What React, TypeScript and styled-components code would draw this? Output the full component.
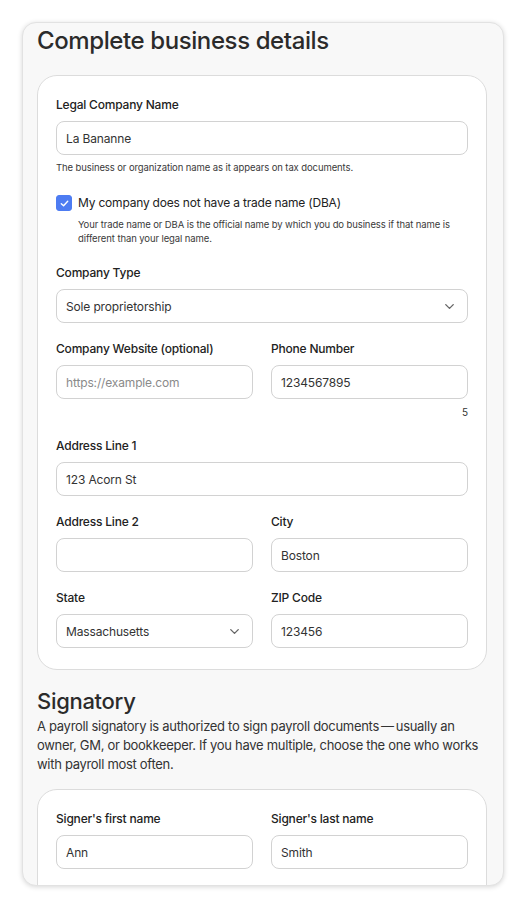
import React, { useState } from "react";
import styled, { createGlobalStyle } from "styled-components";

const GlobalStyle = createGlobalStyle`
  html, body {
    margin: 0;
    padding: 0;
    background: #fff;
  }
  body {
    font-family: Inter, "Noto Sans", "Liberation Sans", sans-serif;
    color: #2b2b2b;
  }
  * {
    box-sizing: border-box;
  }
`;

const Panel = styled.div`
  margin: 22px;
  width: 482px;
  height: 864px;
  overflow: hidden;
  background: #f8f8f8;
  border: 1px solid #e2e2e2;
  border-radius: 14px;
  box-shadow: 0 1px 5px rgba(0, 0, 0, 0.16);
  padding: 3px 16px 0 14px;
`;

const Title = styled.h1`
  margin: 0 0 19px;
  font-size: 24px;
  line-height: 30px;
  font-weight: 500;
  letter-spacing: -0.4px;
  color: #2b2b2b;
`;

const Card = styled.div<{ $bottom?: number }>`
  background: #fff;
  border: 1px solid #dcdcdc;
  border-radius: 20px;
  padding: 20px 18px ${(p) => p.$bottom ?? 21}px;
  display: flex;
  flex-direction: column;
`;

const Field = styled.div`
  display: flex;
  flex-direction: column;
  gap: 7px;
  min-width: 0;
`;

const Label = styled.label`
  font-size: 12px;
  line-height: 18px;
  font-weight: 500;
  letter-spacing: -0.2px;
  color: #222;
`;

const Input = styled.input`
  width: 100%;
  height: 34px;
  border: 1px solid #d2d2d2;
  border-radius: 8px;
  padding: 0 9px;
  font-family: inherit;
  font-size: 12px;
  letter-spacing: -0.15px;
  color: #333;
  background: #fff;
  outline: none;
  &::placeholder {
    color: #8a8a8a;
  }
`;

const Help = styled.p`
  margin: 6px 0 0;
  font-size: 9.5px;
  line-height: 14px;
  letter-spacing: -0.1px;
  color: #3a3a3a;
`;

const CheckRow = styled.div`
  margin-top: 19px;
  display: flex;
  align-items: center;
  gap: 6px;
`;

const CheckBox = styled.span<{ $checked: boolean }>`
  width: 16px;
  height: 16px;
  border-radius: 3px;
  background: ${(p) => (p.$checked ? "#4d7cf2" : "#fff")};
  border: 1px solid ${(p) => (p.$checked ? "#4d7cf2" : "#bbb")};
  display: flex;
  align-items: center;
  justify-content: center;
  cursor: pointer;
  svg {
    width: 11px;
    height: 11px;
  }
`;

const CheckLabel = styled.span`
  font-size: 12px;
  line-height: 18px;
  letter-spacing: -0.2px;
  color: #222;
`;

const CheckDesc = styled.p`
  margin: 6px 0 0 22px;
  font-size: 9.5px;
  line-height: 14px;
  letter-spacing: -0.1px;
  color: #3a3a3a;
`;

const Row = styled.div<{ $top?: number }>`
  display: grid;
  grid-template-columns: 1fr 1fr;
  column-gap: 18px;
  margin-top: ${(p) => p.$top ?? 17}px;
`;

const Block = styled.div<{ $top?: number }>`
  margin-top: ${(p) => p.$top ?? 17}px;
`;

const SelectBox = styled.div`
  height: 34px;
  border: 1px solid #d2d2d2;
  border-radius: 8px;
  padding: 0 10px 0 9px;
  display: flex;
  align-items: center;
  justify-content: space-between;
  font-size: 12px;
  letter-spacing: -0.15px;
  color: #333;
  background: #fff;
  svg {
    width: 15px;
    height: 15px;
    color: #666;
  }
`;

const Counter = styled.div`
  margin-top: 6px;
  text-align: right;
  font-size: 10px;
  line-height: 14px;
  color: #333;
`;

const Heading = styled.h2`
  margin: 17px 0 2px;
  font-size: 22px;
  line-height: 28px;
  font-weight: 500;
  letter-spacing: -0.3px;
  color: #2b2b2b;
`;

const Intro = styled.p`
  margin: 0 0 15px;
  font-size: 13px;
  line-height: 19px;
  letter-spacing: -0.3px;
  color: #333;
`;

const Chevron = () => (
  <svg viewBox="0 0 24 24" fill="none" stroke="currentColor" strokeWidth={2.2} strokeLinecap="round" strokeLinejoin="round">
    <path d="m6 9 6 6 6-6" />
  </svg>
);

const Select = ({ value }: { value: string }) => (
  <SelectBox>
    <span>{value}</span>
    <Chevron />
  </SelectBox>
);

export default function App() {
  const [noDba, setNoDba] = useState(true);

  return (
    <>
      <GlobalStyle />
      <Panel>
        <Title>Complete business details</Title>
        <Card>
          <Field>
            <Label>Legal Company Name</Label>
            <Input defaultValue="La Bananne" />
          </Field>
          <Help>The business or organization name as it appears on tax documents.</Help>

          <CheckRow>
            <CheckBox $checked={noDba} onClick={() => setNoDba(!noDba)}>
              {noDba && (
                <svg viewBox="0 0 24 24" fill="none" stroke="#fff" strokeWidth={3} strokeLinecap="round" strokeLinejoin="round">
                  <path d="M5 12.5 10 17 19 7" />
                </svg>
              )}
            </CheckBox>
            <CheckLabel>My company does not have a trade name (DBA)</CheckLabel>
          </CheckRow>
          <CheckDesc>
            Your trade name or DBA is the official name by which you do business if that name is
            different than your legal name.
          </CheckDesc>

          <Block $top={18}>
            <Field>
              <Label>Company Type</Label>
              <Select value="Sole proprietorship" />
            </Field>
          </Block>

          <Row>
            <Field>
              <Label>Company Website (optional)</Label>
              <Input placeholder="https://example.com" />
            </Field>
            <Field>
              <Label>Phone Number</Label>
              <Input defaultValue="1234567895" />
            </Field>
          </Row>
          <Counter>5</Counter>

          <Block $top={18}>
            <Field>
              <Label>Address Line 1</Label>
              <Input defaultValue="123 Acorn St" />
            </Field>
          </Block>

          <Row>
            <Field>
              <Label>Address Line 2</Label>
              <Input />
            </Field>
            <Field>
              <Label>City</Label>
              <Input defaultValue="Boston" />
            </Field>
          </Row>

          <Row>
            <Field>
              <Label>State</Label>
              <Select value="Massachusetts" />
            </Field>
            <Field>
              <Label>ZIP Code</Label>
              <Input defaultValue="123456" />
            </Field>
          </Row>
        </Card>

        <Heading>Signatory</Heading>
        <Intro>
          A payroll signatory is authorized to sign payroll documents{"\u2009—\u2009"}usually an owner, GM,
          or bookkeeper. If you have multiple, choose the one who works with payroll most often.
        </Intro>

        <Card $bottom={60}>
          <Row $top={0}>
            <Field>
              <Label>Signer's first name</Label>
              <Input defaultValue="Ann" />
            </Field>
            <Field>
              <Label>Signer's last name</Label>
              <Input defaultValue="Smith" />
            </Field>
          </Row>
        </Card>
      </Panel>
    </>
  );
}
